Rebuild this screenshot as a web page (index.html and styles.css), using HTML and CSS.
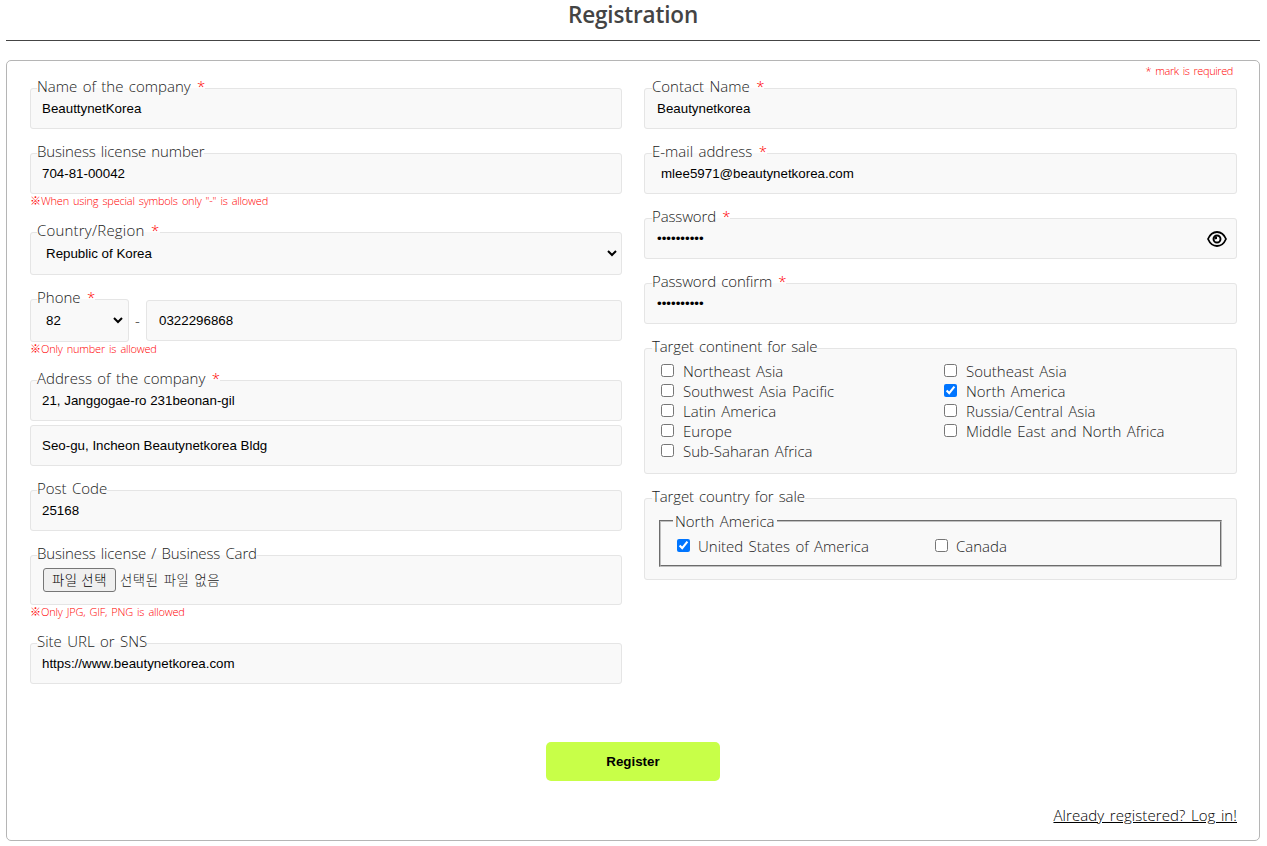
FILE: index.html
```html
<!DOCTYPE html>
<html lang="en">
<head>
<meta charset="utf-8">
<title>Registration</title>
<link rel="stylesheet" href="styles.css">
</head>
<body>
<h1 class="title">Registration</h1>
<form class="panel">
  <p class="required-note">* mark is required</p>
  <div class="columns">
    <div class="column">
      <fieldset class="field"><legend>Name of the company <i>*</i></legend><input class="text" type="text" value="BeauttynetKorea"></fieldset>
      <div>
        <fieldset class="field"><legend class="tight">Business license number</legend><input class="text" type="text" value="704-81-00042"></fieldset>
        <p class="hint"><span class="mark">※</span>When using special symbols only "-" is allowed</p>
      </div>
      <fieldset class="field field-select"><legend class="loose">Country/Region <i>*</i></legend><select class="select"><option>Republic of Korea</option></select></fieldset>
      <div>
        <div class="phone">
          <fieldset class="field field-select code"><legend>Phone <i>*</i></legend><select class="select"><option>82</option></select></fieldset>
          <span class="dash">-</span>
          <input class="plain number" type="text" value="0322296868">
        </div>
        <p class="hint"><span class="mark">※</span>Only number is allowed</p>
      </div>
      <div class="address">
        <fieldset class="field"><legend>Address of the company <i>*</i></legend><input class="text" type="text" value="21, Janggogae-ro 231beonan-gil"></fieldset>
        <input class="plain" type="text" value="Seo-gu, Incheon Beautynetkorea Bldg">
      </div>
      <fieldset class="field"><legend>Post Code</legend><input class="text" type="text" value="25168"></fieldset>
      <div>
        <fieldset class="field field-file"><legend class="tight">Business license / Business Card</legend>
          <div class="file"><button type="button" class="file-button">파일 선택</button><span>선택된 파일 없음</span></div>
        </fieldset>
        <p class="hint"><span class="mark">※</span>Only JPG, GIF, PNG is allowed</p>
      </div>
      <fieldset class="field"><legend>Site URL or SNS</legend><input class="text" type="text" value="https://www.beautynetkorea.com"></fieldset>
    </div>
    <div class="column column-right">
      <fieldset class="field"><legend>Contact Name <i>*</i></legend><input class="text" type="text" value="Beautynetkorea"></fieldset>
      <fieldset class="field"><legend>E-mail address <i>*</i></legend><input class="text email" type="text" value="mlee5971@beautynetkorea.com"></fieldset>
      <fieldset class="field"><legend class="tight">Password <i>*</i></legend>
        <div class="secret"><input class="text" type="password" value="abcdefghij">
          <svg class="eye" width="20" height="16" viewBox="0 0 20 16"><path d="M1 8C3 3.400 6.200 1 10 1S17 3.400 19 8c-2 4.600-5.200 7-9 7S3 12.600 1 8Z" fill="none" stroke="#000" stroke-width="1.800" stroke-linejoin="round"/><circle cx="10" cy="8" r="3.500" fill="none" stroke="#000" stroke-width="1.900"/><path d="M7.500 8.500A2.600 2.600 0 0 1 10 5.500V8Z"/></svg>
        </div>
      </fieldset>
      <fieldset class="field"><legend class="tight">Password confirm <i>*</i></legend><input class="text" type="password" value="abcdefghij"></fieldset>
      <fieldset class="field field-continent"><legend class="tight">Target continent for sale</legend>
        <div class="options continents">
          <label><input type="checkbox"><span>Northeast Asia</span></label>
          <label><input type="checkbox"><span>Southeast Asia</span></label>
          <label><input type="checkbox"><span>Southwest Asia Pacific</span></label>
          <label><input type="checkbox" checked><span>North America</span></label>
          <label><input type="checkbox"><span>Latin America</span></label>
          <label><input type="checkbox"><span>Russia/Central Asia</span></label>
          <label><input type="checkbox"><span>Europe</span></label>
          <label><input type="checkbox"><span>Middle East and North Africa</span></label>
          <label><input type="checkbox"><span>Sub-Saharan Africa</span></label>
        </div>
      </fieldset>
      <fieldset class="field field-country"><legend class="tight">Target country for sale</legend>
        <fieldset class="region"><legend>North America</legend>
          <div class="options countries">
            <label><input type="checkbox" checked><span>United States of America</span></label>
            <label><input type="checkbox"><span>Canada</span></label>
          </div>
        </fieldset>
      </fieldset>
    </div>
  </div>
  <button type="button" class="register">Register</button>
  <a class="login">Already registered? Log in!</a>
</form>
</body>
</html>
```
FILE: styles.css
```css
* { box-sizing: border-box; }
body {
  margin: 0;
  padding: 0 7px 0 6px;
  background: #fff;
  color: #222;
  font: 300 15px/21px "Open Sans", "Noto Sans CJK KR", sans-serif;
  word-spacing: 1.5px;
  overflow: hidden;
}
.title {
  margin: 0 0 19px;
  height: 41px;
  border-bottom: 1px solid #444;
  color: #444;
  font: 600 22.500px/30px "Open Sans", sans-serif;
  letter-spacing: -.15px;
  text-align: center;
}
.panel {
  display: flex;
  flex-direction: column;
  height: 781px;
  padding: 0 22px 0 23px;
  border: 1px solid #b5b5b5;
  border-radius: 5px;
}
.required-note {
  margin: 0;
  padding: 3px 4px 0 0;
  height: 17px;
  font-size: 11px;
  line-height: 14px;
  letter-spacing: -.4px;
  text-align: right;
  color: #f00;
}
.columns { display: grid; grid-template-columns: 592px 593px; gap: 22px; height: 606px; }
.column { display: flex; flex-direction: column; gap: 14px; min-width: 0; }
.field {
  margin: 0;
  padding: 0 12px 0 11px;
  width: 100%;
  height: 51px;
  min-width: 0;
  border: 1px solid #e5e5e5;
  border-radius: 3px;
  background: #f9f9f9;
}
.column-right .field { padding-left: 12px; }
.field > legend { margin-left: -5px; padding: 0; height: 21px; line-height: 17px; white-space: nowrap; }
.column-right .field > legend { margin-left: -5px; }
legend.tight { letter-spacing: -.14px; }
legend.loose { letter-spacing: .2px; }
legend i { margin-left: 1px; font-style: normal; color: #f00; }
.field.field-select { height: 53px; padding: 0 1px 0 11px; }
.field.code { width: 99px; flex: none; padding-right: 2px; }
.field-file { height: 60px; }
.field-continent { height: 136px; }
.field-country { height: 92px; }
.text, .plain, .select { font: 13.333px "Liberation Sans", Arial, sans-serif; color: #000; word-spacing: 0; }
.text, .select {
  display: block;
  width: 100%;
  height: 19px;
  margin: 0;
  padding: 0;
  border: 0;
  outline: 0;
  background: transparent;
}
.select { height: 20px; }
.email { padding-left: 4px; }
.plain {
  display: block;
  width: 100%;
  height: 41px;
  padding: 0 11px;
  border: 1px solid #e5e5e5;
  border-radius: 3px;
  background: #f9f9f9;
}
.address { display: flex; flex-direction: column; gap: 4px; }
.phone { display: flex; align-items: flex-end; }
.dash { width: 17px; height: 32px; text-align: center; }
.number { flex: 1; margin-bottom: 1px; padding-left: 12px; }
.hint {
  margin: 0;
  height: 14px;
  font-size: 11px;
  line-height: 12px;
  letter-spacing: -.22px;
  color: #f00;
  white-space: nowrap;
}
.mark { display: inline-block; width: 11px; font-family: "Noto Sans CJK KR", sans-serif; font-weight: 100; }
.file {
  display: flex;
  align-items: center;
  gap: 4px;
  margin: 2px 0 0 1px;
  font: 300 13.333px/24px "Noto Sans CJK KR", sans-serif;
  letter-spacing: .6px;
}
.file-button {
  width: 73px;
  height: 24px;
  padding: 0;
  border: 1px solid #767676;
  border-radius: 3px;
  background: #efefef;
  color: #000;
  font: inherit;
  letter-spacing: inherit;
  line-height: 20px;
}
.secret { display: flex; height: 19px; margin-right: -3px; }
.eye { flex: none; margin-top: 2px; }
.options { display: grid; }
.options label { display: flex; align-items: center; height: 20px; white-space: nowrap; }
.options input { width: 13px; height: 13px; margin: 0 9px 2px 0; }
.continents { grid-template-columns: 283px 1fr; padding: 2px 0 0 4px; }
.region { height: 57px; margin: 1px 2px 0; padding: 0 16px; border: 2px groove #c0c0c0; }
.region > legend { margin-left: -4px; padding: 0 2px; height: 21px; line-height: 22px; }
.countries { grid-template-columns: 258px 1fr; padding-top: 5px; }
.countries input { margin-right: 8px; }
.register {
  align-self: center;
  width: 174px;
  height: 39px;
  margin: 58px 1px 0 0;
  border: 0;
  border-radius: 5px;
  background: #c8ff48;
  color: #000;
  font: bold 13.333px "Liberation Sans", Arial, sans-serif;
}
.login { align-self: flex-end; margin-top: 24px; color: #000; letter-spacing: .08px; text-decoration: underline; }
```
